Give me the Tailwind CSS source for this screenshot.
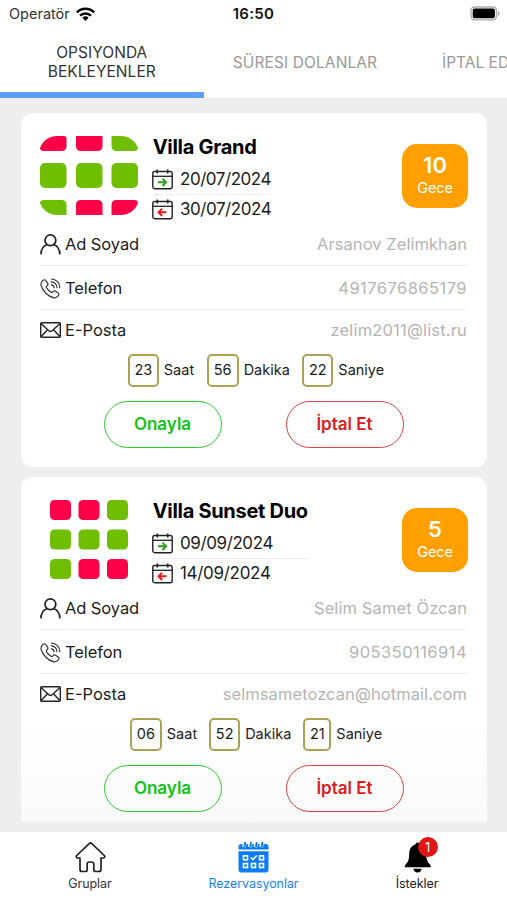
<!DOCTYPE html>
<html lang="tr">
<head>
<meta charset="utf-8">
<title>Rezervasyonlar</title>
<script src="https://cdn.jsdelivr.net/npm/@tailwindcss/browser@4"></script>
</head>
<body class="w-[507px] h-[900px] overflow-hidden bg-white font-['Inter','Liberation_Sans',sans-serif] text-[#1c1c1c]">
<svg class="hidden">
  <symbol id="cal" viewBox="0 0 21 21"><g fill="none" stroke="#222" stroke-width="1.4"><rect x=".8" y="2.5" width="19.4" height="17.2" rx="2"/><path d="M.8 7.3h19.4" stroke-width="1.3"/><path d="M5.3.4v4M15.7.4v4" stroke-width="1.6"/></g></symbol>
  <symbol id="in" viewBox="0 0 21 21"><use href="#cal"/><path d="M6 13.3h7.500M10.500 9.600l3.600 3.700-3.600 3.700" fill="none" stroke="#2f9e1b" stroke-width="2"/></symbol>
  <symbol id="out" viewBox="0 0 21 21"><use href="#cal"/><path d="M14.500 13.300H7M10.100 9.600l-3.600 3.700 3.600 3.700" fill="none" stroke="#f01818" stroke-width="2"/></symbol>
  <symbol id="person" viewBox="0 0 21 21"><g fill="none" stroke="#222" stroke-width="1.700"><circle cx="10.400" cy="6.300" r="5.400"/><path d="M.9 20.400C1.200 14.800 4.200 11.600 7 10.800M13.800 10.800c2.800.8 5.800 4 6.100 9.600"/></g></symbol>
  <symbol id="phone" viewBox="0 0 21 21"><g fill="none" stroke="#333" stroke-width="1.200" stroke-linecap="round" stroke-linejoin="round"><path d="M3.200 2.300c.9-.8 1.900-.7 2.600.2l1.800 2.600c.6.9.4 1.700-.4 2.400-1 .8-1.200 1.300-.6 2.300a15.500 15.500 0 0 0 4.300 4.400c1 .6 1.500.4 2.300-.5.7-.8 1.500-1 2.400-.4l2.600 1.800c.9.700 1 1.700.2 2.600-1.300 1.600-3 2.500-5.200 1.900C7.900 18.200 3 13.300 1.200 7.700.6 5.500 1.500 3.500 3.200 2.300z"/><path d="M11.500 1a8.600 8.600 0 0 1 8.300 8.600M11.400 3.900a5.800 5.800 0 0 1 5.600 5.700M11.300 6.800a3 3 0 0 1 2.800 2.900"/></g></symbol>
  <symbol id="mail" viewBox="0 0 21 16"><g fill="none" stroke="#222" stroke-width="1.400"><rect x=".7" y=".8" width="19.600" height="14.400" rx="1"/><path d="M1 1.500l7.800 7.300c1 .9 2.400.9 3.400 0L20 1.500M1.200 14.600l6.300-6.800M19.800 14.600l-6.300-6.800"/></g></symbol>
</svg>

<header class="h-[97.500px] bg-white">
  <div class="h-7 grid grid-cols-3 items-center text-[14.500px]">
    <div class="flex items-center pl-[9px] gap-[6px] pb-px">
      <span class="w-[61px] whitespace-nowrap text-[#333]">Operatör</span>
      <svg class="w-[19px] h-[14px]" viewBox="0 0 19 14"><g fill="none" stroke="#000" stroke-width="2.500"><path d="M.9 5.300a12.300 12.300 0 0 1 17.200 0M4 8.700a7.800 7.800 0 0 1 11 0"/></g><path d="M6.400 10.800a4.500 4.500 0 0 1 6.200 0L9.500 13.900z"/></svg>
    </div>
    <div class="text-center font-semibold text-[#111] text-[15px] tracking-[0.300px]">16:50</div>
    <div class="flex justify-end pr-[6px] pb-[2px]">
      <svg class="w-[31px] h-[15px]" viewBox="0 0 31 15"><rect x="1" y="1" width="25.500" height="12.800" rx="3.500" fill="#fff" stroke="#aaa" stroke-width="1.300"/><rect x="2.700" y="2.600" width="22.200" height="9.600" rx="1.800"/><path d="M28 5v5c2.200-.7 2.200-4.300 0-5z" fill="#aaa"/></svg>
    </div>
  </div>
  <nav class="flex h-[69.500px] text-[15.500px] leading-[19px] text-[#999]">
    <div class="w-[203.500px] shrink-0 h-full border-b-[6px] border-[#5d9df5] text-[#333] text-center flex items-center justify-center pt-[5px]"><span class="tracking-[0.050px]">OPSIYONDA<br>BEKLEYENLER</span></div>
    <div class="w-[203px] shrink-0 flex items-center justify-center pb-px tracking-[0.100px]">SÜRESI DOLANLAR</div>
    <div class="w-[100px] overflow-hidden pl-[35.500px] pb-px flex items-center whitespace-nowrap">İPTAL EDİLENLER</div>
  </nav>
</header>

<main class="h-[734.500px] bg-[#eee] px-[20.500px] pt-[15px]">
  <div class="h-[709.500px] overflow-hidden flex flex-col gap-[10px]">
    <section class="h-[354px] shrink-0 rounded-[12px] bg-white px-[19.500px]">
      <div class="h-[110px] flex items-start">
        <svg class="w-[98px] h-[79px] mt-[23.500px] shrink-0" viewBox="0 0 98 79">
          <g fill="#ff0048"><path d="M0 12C3 4 10 0 17 0h7q2.500 0 2.500 2.500V10q0 5-5 5H4q-4 0-4-3z"/><path d="M36 0h26.500v10q0 5-5 5H41q-5 0-5-5z"/><path d="M41 64h16.500q5 0 5 5v10H36V69q0-5 5-5z"/><path d="M76.500 64H94q4 0 4 3c-3 8-10 12-17 12h-9.500V69q0-5 5-5z"/></g>
          <g fill="#6fbe00"><path d="M71.500 0H81c7 0 14 4 17 12q0 3-4 3H76.500q-5 0-5-5z"/><rect y="27" width="26.500" height="25" rx="5"/><rect x="36" y="27" width="26.500" height="25" rx="5"/><rect x="71.500" y="27" width="26.500" height="25" rx="5"/><path d="M4 64h17.500q5 0 5 5v10H17C10 79 3 75 0 67q0-3 4-3z"/></g>
        </svg>
        <div class="ml-[14px] pt-[20px]">
          <h2 class="h-[31px] pl-[0.700px] leading-[29px] text-[20px] font-bold text-black whitespace-nowrap tracking-[-0.300px]">Villa Grand</h2>
          <div class="h-[31px] border-b border-[#eee] flex items-center gap-[7px] text-[17px] tracking-[-0.450px] pt-[2px]"><svg class="w-[21px] h-[21px]"><use href="#in"/></svg><span>20/07/2024</span></div>
          <div class="h-[30px] flex items-center gap-[7px] text-[17px] tracking-[-0.450px]"><svg class="w-[21px] h-[21px]"><use href="#out"/></svg><span>30/07/2024</span></div>
        </div>
        <div class="ml-auto -mr-px mt-[31px] w-[66px] h-[64px] rounded-[15px] bg-[#ffa000] text-white text-center pt-[8px]"><div class="text-[22px] leading-[26px] font-semibold">10</div><div class="text-[14.500px] leading-[20px] tracking-[-0.100px]">Gece</div></div>
      </div>
      <div class="text-[16.500px]">
        <div class="h-[43px] border-b border-[#eee] flex items-center gap-[4px] pt-px"><svg class="w-[21px] h-[21px]"><use href="#person"/></svg><span class="tracking-[-0.100px]">Ad Soyad</span><span class="ml-auto text-[#b4b4b4] tracking-[0.050px]">Arsanov Zelimkhan</span></div>
        <div class="h-[44px] border-b border-[#eee] flex items-center gap-[4px] pt-[2px]"><svg class="w-[21px] h-[21px]"><use href="#phone"/></svg><span class="tracking-[-0.100px]">Telefon</span><span class="ml-auto text-[#b4b4b4] tracking-[0.450px]">4917676865179</span></div>
        <div class="h-[42px] flex items-center gap-[4px] pb-[1px]"><svg class="w-[21px] h-[16px]"><use href="#mail"/></svg><span>E-Posta</span><span class="ml-auto text-[#b4b4b4] tracking-[0.170px]">zelim2011@list.ru</span></div>
      </div>
      <div class="mt-[2px] pl-[5px] h-[33px] flex items-center justify-center gap-[12.500px] text-[14.500px]">
        <div class="flex items-center gap-[5px]"><b class="h-[33px] w-[31px] flex items-center justify-center border-2 border-[#aba155] rounded-[5px] font-normal">23</b>Saat</div>
        <div class="flex items-center gap-[5px]"><b class="h-[33px] w-[32px] flex items-center justify-center border-2 border-[#aba155] rounded-[5px] font-normal">56</b>Dakika</div>
        <div class="flex items-center gap-[5px]"><b class="h-[33px] w-[31px] flex items-center justify-center border-2 border-[#aba155] rounded-[5px] font-normal">22</b>Saniye</div>
      </div>
      <div class="mt-[14px] flex justify-center gap-[64px] text-[17px] font-semibold">
        <button class="w-[118px] h-[47px] pt-px rounded-full border-[1.500px] border-[#2fca32] text-[#0fc414]">Onayla</button>
        <button class="w-[118px] h-[47px] pt-px rounded-full border-[1.500px] border-[#dc4040] text-[#dc1c1c]">İptal Et</button>
      </div>
    </section>

    <section class="h-[354px] shrink-0 rounded-[12px] bg-linear-to-b from-white from-70% to-[#f9f9f9] px-[19.500px]">
      <div class="h-[110px] flex items-start">
        <svg class="w-[98px] h-[79px] mt-[23.500px] shrink-0" viewBox="0 0 98 79">
          <g fill="#ff0048"><rect x="10" width="21" height="20" rx="4.500"/><rect x="38.500" width="21" height="20" rx="4.500"/><rect x="38.500" y="59" width="21" height="20" rx="4.500"/><rect x="67" y="59" width="21" height="20" rx="4.500"/></g>
          <g fill="#6fbe00"><rect x="67" width="21" height="20" rx="4.500"/><rect x="10" y="29.500" width="21" height="20" rx="4.500"/><rect x="38.500" y="29.500" width="21" height="20" rx="4.500"/><rect x="67" y="29.500" width="21" height="20" rx="4.500"/><rect x="10" y="59" width="21" height="20" rx="4.500"/></g>
        </svg>
        <div class="ml-[14px] pt-[20px]">
          <h2 class="h-[31px] pl-[0.700px] leading-[29px] text-[20px] font-bold text-black whitespace-nowrap tracking-[-0.300px]">Villa Sunset Duo</h2>
          <div class="h-[31px] border-b border-[#eee] flex items-center gap-[7px] text-[17px] tracking-[-0.400px] pt-[2px]"><svg class="w-[21px] h-[21px]"><use href="#in"/></svg><span>09/09/2024</span></div>
          <div class="h-[30px] flex items-center gap-[7px] text-[17px] tracking-[-0.300px]"><svg class="w-[21px] h-[21px]"><use href="#out"/></svg><span>14/09/2024</span></div>
        </div>
        <div class="ml-auto -mr-px mt-[31px] w-[66px] h-[64px] rounded-[15px] bg-[#ffa000] text-white text-center pt-[8px]"><div class="text-[22px] leading-[26px] font-semibold">5</div><div class="text-[14.500px] leading-[20px] tracking-[-0.100px]">Gece</div></div>
      </div>
      <div class="text-[16.500px]">
        <div class="h-[43px] border-b border-[#eee] flex items-center gap-[4px] pt-px"><svg class="w-[21px] h-[21px]"><use href="#person"/></svg><span class="tracking-[-0.100px]">Ad Soyad</span><span class="ml-auto text-[#b4b4b4] tracking-[0.100px]">Selim Samet Özcan</span></div>
        <div class="h-[44px] border-b border-[#eee] flex items-center gap-[4px] pt-[2px]"><svg class="w-[21px] h-[21px]"><use href="#phone"/></svg><span class="tracking-[-0.100px]">Telefon</span><span class="ml-auto text-[#b4b4b4] tracking-[0.450px]">905350116914</span></div>
        <div class="h-[42px] flex items-center gap-[4px] pb-[1px]"><svg class="w-[21px] h-[16px]"><use href="#mail"/></svg><span>E-Posta</span><span class="ml-auto text-[#b4b4b4] tracking-[0.070px]">selmsametozcan@hotmail.com</span></div>
      </div>
      <div class="mt-[2px] pl-[5px] h-[33px] flex items-center justify-center gap-[12px] text-[14.500px]">
        <div class="flex items-center gap-[5px]"><b class="h-[33px] w-[32px] flex items-center justify-center border-2 border-[#aba155] rounded-[5px] font-normal">06</b>Saat</div>
        <div class="flex items-center gap-[5px]"><b class="h-[33px] w-[31px] flex items-center justify-center border-2 border-[#aba155] rounded-[5px] font-normal">52</b>Dakika</div>
        <div class="flex items-center gap-[5px]"><b class="h-[33px] w-[28px] flex items-center justify-center border-2 border-[#aba155] rounded-[5px] font-normal">21</b>Saniye</div>
      </div>
      <div class="mt-[14px] flex justify-center gap-[64px] text-[17px] font-semibold">
        <button class="w-[118px] h-[47px] pt-px rounded-full border-[1.500px] border-[#2fca32] text-[#0fc414]">Onayla</button>
        <button class="w-[118px] h-[47px] pt-px rounded-full border-[1.500px] border-[#dc4040] text-[#dc1c1c]">İptal Et</button>
      </div>
    </section>
  </div>
</main>

<footer class="h-[68px] bg-white flex justify-center text-[12.500px] leading-[16px] tracking-[-0.060px]">
  <div class="w-[163.500px] flex flex-col items-center pt-[10px] text-[#333]">
    <svg class="w-[31px] h-[31px]" viewBox="0 0 31 31"><path d="M14.200 1.600q1.300-1.200 2.600 0l12.500 11.900q1.200 1.600-.6 2.500H26v11.500q0 2-2 2h-3.200q-2 0-2-2v-5.500q0-2-2-2h-2.600q-2 0-2 2v5.500q0 2-2 2H7q-2 0-2-2V16H2.300q-1.800-.9-.6-2.500z" fill="none" stroke="#222" stroke-width="1.700" stroke-linejoin="round"/></svg>
    <span class="mt-[3px]">Gruplar</span>
  </div>
  <div class="w-[163.500px] flex flex-col items-center pt-[10px] text-[#1682fb]">
    <svg class="w-[31px] h-[31px]" viewBox="0 0 31 31"><path d="M.5 7.500V5q0-3 3-3h24q3 0 3 3v2.500zM.5 9.300h30v18.200q0 3-3 3h-24q-3 0-3-3z" fill="#0b7bfb"/><path d="M7 0L6 5.200M12.700 0l-1 5.200M18.500 0l-1 5.200M24.200 0l-1 5.200" stroke="#fff" stroke-width="3.800"/><path d="M7.300 0L6.500 5M13 0l-.8 5M18.800 0L18 5M24.500 0l-.8 5" stroke="#0b7bfb" stroke-width="1.900"/><g fill="none" stroke="#fff" stroke-width="1.600"><rect x="5.500" y="13.800" width="4" height="4"/><rect x="21.500" y="13.800" width="4" height="4"/><rect x="5.500" y="21.500" width="4" height="4"/><rect x="13.500" y="21.500" width="4" height="4"/><rect x="21.500" y="21.500" width="4" height="4"/><path d="M12.800 15.500l2 2 4-4"/></g></svg>
    <span class="mt-[3px]">Rezervasyonlar</span>
  </div>
  <div class="w-[163.500px] flex flex-col items-center pt-[10px] text-[#222]">
    <div class="relative w-[27px] h-[31px]">
      <svg class="w-[27px] h-[31px]" viewBox="0 0 27 31"><path d="M13.500.5q2 0 2 2c4.500 1.200 6.800 4.800 6.800 9.500 0 6 1.300 8 3.300 10q1.500 1.500 1 3.300H.9q-.5-1.800 1-3.300c2-2 3.300-4 3.300-10 0-4.700 2-8.300 6.300-9.500q0-2 2-2zM9.300 26.800h8.400q-.7 3.700-4.200 3.700t-4.200-3.700z" fill="#000"/></svg>
      <span class="absolute left-[14px] top-[-5px] w-[20px] h-[20px] rounded-full bg-[#e01515] text-white text-[13px] leading-[20px] text-center">1</span>
    </div>
    <span class="mt-[3px]">İstekler</span>
  </div>
</footer>
</body>
</html>
